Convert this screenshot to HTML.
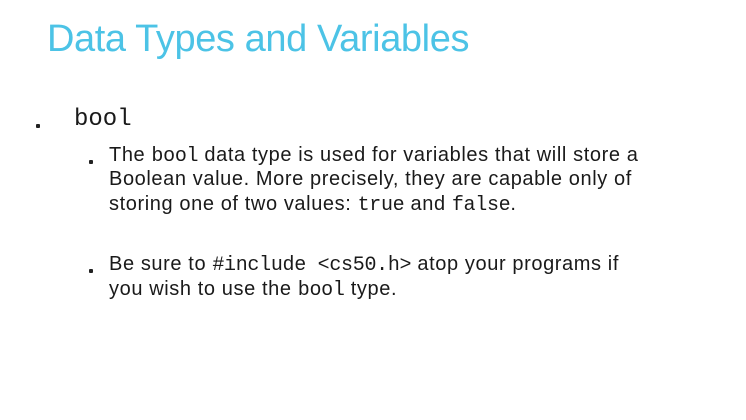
<!DOCTYPE html>
<html><head><meta charset="utf-8"><style>
body{margin:0;width:746px;height:420px;background:#fff;position:relative;overflow:hidden;font-family:"Liberation Sans",sans-serif;color:#1a1a1a}
.t{position:absolute;left:47px;top:18px;font-size:38px;color:#4cc3e6;white-space:nowrap;letter-spacing:-0.4px}
.l{position:absolute;white-space:nowrap;font-size:20px;letter-spacing:0.6px;line-height:24px}
.m{font-family:"Liberation Mono",monospace;letter-spacing:-0.3px}
.d{position:absolute;width:4px;height:4px;background:#222;border-radius:1px}
</style></head><body>
<div class="t">Data Types and Variables</div>
<div class="d" style="left:36px;top:124px"></div>
<div class="l m" style="left:74px;top:106px;font-size:24px;line-height:28px;letter-spacing:0">bool</div>
<div class="d" style="left:89px;top:160px"></div>
<div class="l" style="left:109px;top:143px">The <span class="m">bool</span> data type is used for variables that will store a</div>
<div class="l" style="left:109px;top:167px">Boolean value. More precisely, they are capable only of</div>
<div class="l" style="left:109px;top:192px">storing one of two values: <span class="m">true</span> and <span class="m">false</span>.</div>
<div class="d" style="left:89px;top:269px"></div>
<div class="l" style="left:109px;top:252px">Be sure to <span class="m">#include &lt;cs50.h&gt;</span> atop your programs if</div>
<div class="l" style="left:109px;top:277px">you wish to use the <span class="m">bool</span> type.</div>
</body></html>
